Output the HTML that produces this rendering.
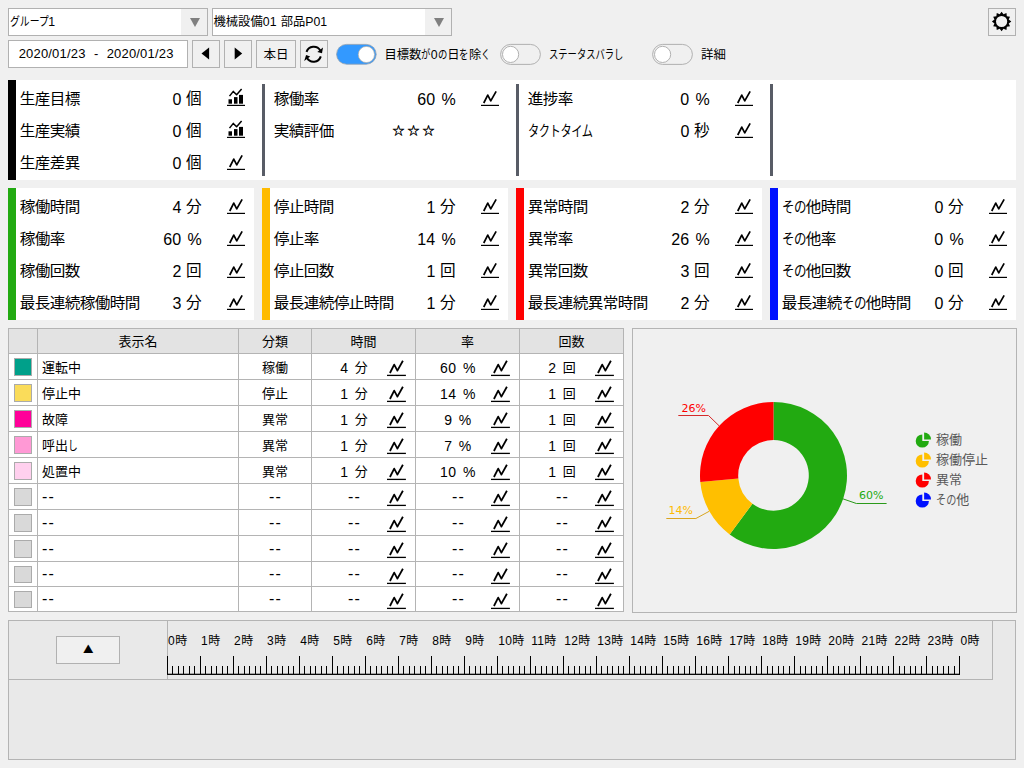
<!DOCTYPE html>
<html lang="ja"><head><meta charset="utf-8"><title>稼働モニタ</title>
<style>
html,body{margin:0;padding:0}
body{width:1024px;height:768px;overflow:hidden;background:#f0f0f0;font-family:"Liberation Sans","Noto Sans CJK JP",sans-serif;color:#000;position:relative;font-size:12px}
div,span{box-sizing:border-box}
.abs{position:absolute}
.box{position:absolute;border:1px solid #b1b1b1;background:#fff}
.btn{position:absolute;border:1px solid #b1b1b1;background:#f0f0f0}
.t12{position:absolute;font-size:12px;line-height:28px;height:28px;white-space:nowrap}
.k{display:inline-block;transform-origin:0 50%;white-space:nowrap}
.kpi{position:absolute;height:32px;line-height:32px;font-size:15.6px;letter-spacing:-.6px;white-space:nowrap;transform:scaleY(.94);transform-origin:0 50%}
.val{position:absolute;height:32px;line-height:32px;font-size:15px;white-space:nowrap;text-align:right;width:80px}
.cell{position:absolute;font-size:13px;white-space:nowrap;height:26px;line-height:26px}
.n{font-size:16px;line-height:0;position:relative;top:.5px;word-spacing:1.5px;letter-spacing:.2px}
.dd{font-size:16px;line-height:0;position:relative;top:.2px;letter-spacing:1.2px;margin-right:-1.2px}
.u{font-size:15.6px;margin-left:-1.6px;margin-right:.3px}
.m{font-size:14px;line-height:0;position:relative;top:.5px;word-spacing:2px;letter-spacing:.5px}
.sw{position:absolute;width:18px;height:18px;border:1px solid #ababab}
svg{position:absolute;overflow:visible}
.tg{position:absolute;width:41px;height:21px;border-radius:11px}
.kn{position:absolute;width:19px;height:19px;border-radius:10px;background:#fff;border:1px solid #a0a0a0;top:0}
</style></head><body>

<div class="box" style="left:8px;top:8px;width:200px;height:28px"></div>
<div class="abs" style="left:181px;top:9px;width:26px;height:26px;background:#f0f0f0"></div>
<svg style="left:190px;top:18px" width="10" height="9"><path d="M0 0H10L5 9Z" fill="#808080"/></svg>
<div class="t12" style="left:9.5px;top:8px;font-size:12.3px"><span class="k" style="transform:scaleX(0.800);margin-right:-9.60px">グループ</span>1</div>
<div class="box" style="left:212px;top:8px;width:240px;height:28px"></div>
<div class="abs" style="left:425px;top:9px;width:26px;height:26px;background:#f0f0f0"></div>
<svg style="left:434px;top:18px" width="10" height="9"><path d="M0 0H10L5 9Z" fill="#808080"/></svg>
<div class="t12" style="left:213.5px;top:8px;font-size:12.3px">機械設備<span style="letter-spacing:.3px">01 </span>部品P01</div>
<div class="box" style="left:8px;top:40px;width:180px;height:28px"></div>
<div class="t12" style="left:18.7px;top:40px;font-size:13px;letter-spacing:.18px">2020/01/23</div>
<div class="t12" style="left:94px;top:40px;font-size:13px">-</div>
<div class="t12" style="left:106.7px;top:40px;font-size:13px;letter-spacing:.18px">2020/01/23</div>
<div class="btn" style="left:192px;top:40px;width:28px;height:28px"></div>
<div class="btn" style="left:224px;top:40px;width:28px;height:28px"></div>
<div class="btn" style="left:256px;top:40px;width:40px;height:28px"></div>
<div class="btn" style="left:300px;top:40px;width:28px;height:28px"></div>
<svg style="left:201px;top:47px" width="9" height="13"><path d="M8.1 .5V12.6L.5 6.55Z" fill="#000"/></svg>
<svg style="left:234px;top:47px" width="9" height="13"><path d="M.7 .5V12.6L8.2 6.55Z" fill="#000"/></svg>
<div class="t12" style="left:256px;top:41px;width:40px;text-align:center;font-size:12.5px">本日</div>
<svg style="left:300px;top:40px" width="28" height="28" viewBox="300 40 28 28"><path d="M306.5 51.9A7.6 7.6 0 0 1 320.3 50.5" fill="none" stroke="#000" stroke-width="2"/><path d="M323.0 47.6L322.0 53.2L317.3 52.0Z" fill="#000"/><path d="M320.8 56.4A7.6 7.6 0 0 1 306.9 57.8" fill="none" stroke="#000" stroke-width="2"/><path d="M304.2 60.9L306.1 55.0L310.2 56.4Z" fill="#000"/></svg>
<svg style="left:0;top:0" width="1024" height="72"><rect x="336.6" y="44.4" width="39.6" height="19.8" rx="9.9" fill="#3399ff" stroke="#8fa0b0" stroke-width=".8"/><circle cx="366.4" cy="54.5" r="8.1" fill="#fff" stroke="#b8b0a8" stroke-width=".7"/></svg>
<div class="t12" style="left:384.5px;top:41px;font-size:12.3px">目標数<span class="k" style="transform:scaleX(0.760);margin-right:-2.88px">が</span>0<span class="k" style="transform:scaleX(0.760);margin-right:-2.88px">の</span>日<span class="k" style="transform:scaleX(0.760);margin-right:-2.88px">を</span>除<span class="k" style="transform:scaleX(0.760);margin-right:-2.88px">く</span></div>
<svg style="left:0;top:0" width="1024" height="72"><rect x="500.6" y="44.4" width="39.8" height="20" rx="10" fill="#f0f0f0" stroke="#a9a9a9" stroke-width=".9"/><circle cx="510.6" cy="54.4" r="8.1" fill="#fff" stroke="#a9a9a9" stroke-width=".9"/></svg>
<div class="t12" style="left:549px;top:41px;font-size:12.4px"><span class="k" style="transform:scaleX(0.750);margin-right:-24.00px">ステータスバラし</span></div>
<svg style="left:0;top:0" width="1024" height="72"><rect x="652.6" y="44.4" width="39.8" height="20" rx="10" fill="#f0f0f0" stroke="#a9a9a9" stroke-width=".9"/><circle cx="662.6" cy="54.4" r="8.1" fill="#fff" stroke="#a9a9a9" stroke-width=".9"/></svg>
<div class="t12" style="left:701px;top:41px;font-size:12.4px">詳細</div>
<div class="btn" style="left:988px;top:8px;width:28px;height:28px"></div>
<svg style="left:0;top:0" width="1024" height="40"><path d="M1001.60 11.80L1003.52 14.35L1006.45 13.10L1006.83 16.27L1010.00 16.65L1008.75 19.58L1011.30 21.50L1008.75 23.42L1010.00 26.35L1006.83 26.73L1006.45 29.90L1003.52 28.65L1001.60 31.20L999.68 28.65L996.75 29.90L996.37 26.73L993.20 26.35L994.45 23.42L991.90 21.50L994.45 19.58L993.20 16.65L996.37 16.27L996.75 13.10L999.68 14.35ZM996.00 21.50A5.60 5.60 0 1 0 1007.20 21.50A5.60 5.60 0 1 0 996.00 21.50Z" fill="#000" fill-rule="evenodd"/></svg>
<div class="abs" style="left:8px;top:80px;width:1008px;height:100px;background:#fff"></div>
<div class="abs" style="left:8px;top:80px;width:8px;height:100px;background:#000"></div>
<div class="abs" style="left:262px;top:84px;width:3px;height:92px;background:#585c66"></div>
<div class="abs" style="left:516px;top:84px;width:3px;height:92px;background:#585c66"></div>
<div class="abs" style="left:770px;top:84px;width:3px;height:92px;background:#585c66"></div>
<div class="kpi" style="left:19.7px;top:83px">生産目標</div>
<div class="val" style="left:122px;top:83px"><span class="n">0 </span><span class="u">個</span></div>
<svg style="left:227px;top:89px" width="18" height="17" viewBox="0 -16 18 17"><rect x="0" y="-0.2" width="18" height="1.2" fill="#000"/><rect x="1.5" y="-5.7" width="3.5" height="4.4" fill="#000"/><rect x="7" y="-7.9" width="3.5" height="6.6" fill="#000"/><rect x="12" y="-10.1" width="4" height="8.8" fill="#000"/><path d="M2.5 -8.9L6.3 -13.6L9.6 -10.2L14.6 -15.9" fill="none" stroke="#000" stroke-width="1.5" stroke-linejoin="round"/></svg>
<div class="kpi" style="left:19.7px;top:115px">生産実績</div>
<div class="val" style="left:122px;top:115px"><span class="n">0 </span><span class="u">個</span></div>
<svg style="left:227px;top:121px" width="18" height="17" viewBox="0 -16 18 17"><rect x="0" y="-0.2" width="18" height="1.2" fill="#000"/><rect x="1.5" y="-5.7" width="3.5" height="4.4" fill="#000"/><rect x="7" y="-7.9" width="3.5" height="6.6" fill="#000"/><rect x="12" y="-10.1" width="4" height="8.8" fill="#000"/><path d="M2.5 -8.9L6.3 -13.6L9.6 -10.2L14.6 -15.9" fill="none" stroke="#000" stroke-width="1.5" stroke-linejoin="round"/></svg>
<div class="kpi" style="left:19.7px;top:147px">生産差異</div>
<div class="val" style="left:122px;top:147px"><span class="n">0 </span><span class="u">個</span></div>
<svg style="left:227px;top:153px" width="18" height="17" viewBox="0 -16 18 17"><rect x="0" y="-0.2" width="18" height="1.2" fill="#000"/><path d="M2.75 -2.0L6.75 -9.9L9.75 -4.1L15.15 -13.7" fill="none" stroke="#000" stroke-width="1.7" stroke-linejoin="round"/></svg>
<div class="kpi" style="left:273.7px;top:83px">稼働率</div>
<div class="val" style="left:376px;top:83px"><span class="n">60 %</span></div>
<svg style="left:481px;top:89px" width="18" height="17" viewBox="0 -16 18 17"><rect x="0" y="-0.2" width="18" height="1.2" fill="#000"/><path d="M2.75 -2.0L6.75 -9.9L9.75 -4.1L15.15 -13.7" fill="none" stroke="#000" stroke-width="1.7" stroke-linejoin="round"/></svg>
<div class="kpi" style="left:273.7px;top:115px">実績評価</div>
<div class="kpi" style="left:392.5px;top:115px;font-size:12px;letter-spacing:3px;-webkit-text-stroke:.35px #000">☆☆☆</div>
<div class="kpi" style="left:527.7px;top:83px">進捗率</div>
<div class="val" style="left:630px;top:83px"><span class="n">0 %</span></div>
<svg style="left:735px;top:89px" width="18" height="17" viewBox="0 -16 18 17"><rect x="0" y="-0.2" width="18" height="1.2" fill="#000"/><path d="M2.75 -2.0L6.75 -9.9L9.75 -4.1L15.15 -13.7" fill="none" stroke="#000" stroke-width="1.7" stroke-linejoin="round"/></svg>
<div class="kpi" style="left:527.7px;top:115px"><span class="k" style="transform:scaleX(0.720);margin-right:-25.20px">タクトタイム</span></div>
<div class="val" style="left:630px;top:115px"><span class="n">0 </span><span class="u">秒</span></div>
<svg style="left:735px;top:121px" width="18" height="17" viewBox="0 -16 18 17"><rect x="0" y="-0.2" width="18" height="1.2" fill="#000"/><path d="M2.75 -2.0L6.75 -9.9L9.75 -4.1L15.15 -13.7" fill="none" stroke="#000" stroke-width="1.7" stroke-linejoin="round"/></svg>
<div class="abs" style="left:8px;top:188px;width:246px;height:132px;background:#fff"></div>
<div class="abs" style="left:8px;top:188px;width:8px;height:132px;background:#22aa11"></div>
<div class="kpi" style="left:19.7px;top:191px">稼働時間</div>
<div class="val" style="left:122px;top:191px"><span class="n">4 </span><span class="u">分</span></div>
<svg style="left:227px;top:197px" width="18" height="17" viewBox="0 -16 18 17"><rect x="0" y="-0.2" width="18" height="1.2" fill="#000"/><path d="M2.75 -2.0L6.75 -9.9L9.75 -4.1L15.15 -13.7" fill="none" stroke="#000" stroke-width="1.7" stroke-linejoin="round"/></svg>
<div class="kpi" style="left:19.7px;top:223px">稼働率</div>
<div class="val" style="left:122px;top:223px"><span class="n">60 %</span></div>
<svg style="left:227px;top:229px" width="18" height="17" viewBox="0 -16 18 17"><rect x="0" y="-0.2" width="18" height="1.2" fill="#000"/><path d="M2.75 -2.0L6.75 -9.9L9.75 -4.1L15.15 -13.7" fill="none" stroke="#000" stroke-width="1.7" stroke-linejoin="round"/></svg>
<div class="kpi" style="left:19.7px;top:255px">稼働回数</div>
<div class="val" style="left:122px;top:255px"><span class="n">2 </span><span class="u">回</span></div>
<svg style="left:227px;top:261px" width="18" height="17" viewBox="0 -16 18 17"><rect x="0" y="-0.2" width="18" height="1.2" fill="#000"/><path d="M2.75 -2.0L6.75 -9.9L9.75 -4.1L15.15 -13.7" fill="none" stroke="#000" stroke-width="1.7" stroke-linejoin="round"/></svg>
<div class="kpi" style="left:19.7px;top:287px">最長連続稼働時間</div>
<div class="val" style="left:122px;top:287px"><span class="n">3 </span><span class="u">分</span></div>
<svg style="left:227px;top:293px" width="18" height="17" viewBox="0 -16 18 17"><rect x="0" y="-0.2" width="18" height="1.2" fill="#000"/><path d="M2.75 -2.0L6.75 -9.9L9.75 -4.1L15.15 -13.7" fill="none" stroke="#000" stroke-width="1.7" stroke-linejoin="round"/></svg>
<div class="abs" style="left:262px;top:188px;width:246px;height:132px;background:#fff"></div>
<div class="abs" style="left:262px;top:188px;width:8px;height:132px;background:#ffbb00"></div>
<div class="kpi" style="left:273.7px;top:191px">停止時間</div>
<div class="val" style="left:376px;top:191px"><span class="n">1 </span><span class="u">分</span></div>
<svg style="left:481px;top:197px" width="18" height="17" viewBox="0 -16 18 17"><rect x="0" y="-0.2" width="18" height="1.2" fill="#000"/><path d="M2.75 -2.0L6.75 -9.9L9.75 -4.1L15.15 -13.7" fill="none" stroke="#000" stroke-width="1.7" stroke-linejoin="round"/></svg>
<div class="kpi" style="left:273.7px;top:223px">停止率</div>
<div class="val" style="left:376px;top:223px"><span class="n">14 %</span></div>
<svg style="left:481px;top:229px" width="18" height="17" viewBox="0 -16 18 17"><rect x="0" y="-0.2" width="18" height="1.2" fill="#000"/><path d="M2.75 -2.0L6.75 -9.9L9.75 -4.1L15.15 -13.7" fill="none" stroke="#000" stroke-width="1.7" stroke-linejoin="round"/></svg>
<div class="kpi" style="left:273.7px;top:255px">停止回数</div>
<div class="val" style="left:376px;top:255px"><span class="n">1 </span><span class="u">回</span></div>
<svg style="left:481px;top:261px" width="18" height="17" viewBox="0 -16 18 17"><rect x="0" y="-0.2" width="18" height="1.2" fill="#000"/><path d="M2.75 -2.0L6.75 -9.9L9.75 -4.1L15.15 -13.7" fill="none" stroke="#000" stroke-width="1.7" stroke-linejoin="round"/></svg>
<div class="kpi" style="left:273.7px;top:287px">最長連続停止時間</div>
<div class="val" style="left:376px;top:287px"><span class="n">1 </span><span class="u">分</span></div>
<svg style="left:481px;top:293px" width="18" height="17" viewBox="0 -16 18 17"><rect x="0" y="-0.2" width="18" height="1.2" fill="#000"/><path d="M2.75 -2.0L6.75 -9.9L9.75 -4.1L15.15 -13.7" fill="none" stroke="#000" stroke-width="1.7" stroke-linejoin="round"/></svg>
<div class="abs" style="left:516px;top:188px;width:246px;height:132px;background:#fff"></div>
<div class="abs" style="left:516px;top:188px;width:8px;height:132px;background:#ff0000"></div>
<div class="kpi" style="left:527.7px;top:191px">異常時間</div>
<div class="val" style="left:630px;top:191px"><span class="n">2 </span><span class="u">分</span></div>
<svg style="left:735px;top:197px" width="18" height="17" viewBox="0 -16 18 17"><rect x="0" y="-0.2" width="18" height="1.2" fill="#000"/><path d="M2.75 -2.0L6.75 -9.9L9.75 -4.1L15.15 -13.7" fill="none" stroke="#000" stroke-width="1.7" stroke-linejoin="round"/></svg>
<div class="kpi" style="left:527.7px;top:223px">異常率</div>
<div class="val" style="left:630px;top:223px"><span class="n">26 %</span></div>
<svg style="left:735px;top:229px" width="18" height="17" viewBox="0 -16 18 17"><rect x="0" y="-0.2" width="18" height="1.2" fill="#000"/><path d="M2.75 -2.0L6.75 -9.9L9.75 -4.1L15.15 -13.7" fill="none" stroke="#000" stroke-width="1.7" stroke-linejoin="round"/></svg>
<div class="kpi" style="left:527.7px;top:255px">異常回数</div>
<div class="val" style="left:630px;top:255px"><span class="n">3 </span><span class="u">回</span></div>
<svg style="left:735px;top:261px" width="18" height="17" viewBox="0 -16 18 17"><rect x="0" y="-0.2" width="18" height="1.2" fill="#000"/><path d="M2.75 -2.0L6.75 -9.9L9.75 -4.1L15.15 -13.7" fill="none" stroke="#000" stroke-width="1.7" stroke-linejoin="round"/></svg>
<div class="kpi" style="left:527.7px;top:287px">最長連続異常時間</div>
<div class="val" style="left:630px;top:287px"><span class="n">2 </span><span class="u">分</span></div>
<svg style="left:735px;top:293px" width="18" height="17" viewBox="0 -16 18 17"><rect x="0" y="-0.2" width="18" height="1.2" fill="#000"/><path d="M2.75 -2.0L6.75 -9.9L9.75 -4.1L15.15 -13.7" fill="none" stroke="#000" stroke-width="1.7" stroke-linejoin="round"/></svg>
<div class="abs" style="left:770px;top:188px;width:246px;height:132px;background:#fff"></div>
<div class="abs" style="left:770px;top:188px;width:8px;height:132px;background:#0011ff"></div>
<div class="kpi" style="left:781.7px;top:191px"><span class="k" style="transform:scaleX(0.800);margin-right:-6.00px">その</span>他時間</div>
<div class="val" style="left:884px;top:191px"><span class="n">0 </span><span class="u">分</span></div>
<svg style="left:989px;top:197px" width="18" height="17" viewBox="0 -16 18 17"><rect x="0" y="-0.2" width="18" height="1.2" fill="#000"/><path d="M2.75 -2.0L6.75 -9.9L9.75 -4.1L15.15 -13.7" fill="none" stroke="#000" stroke-width="1.7" stroke-linejoin="round"/></svg>
<div class="kpi" style="left:781.7px;top:223px"><span class="k" style="transform:scaleX(0.800);margin-right:-6.00px">その</span>他率</div>
<div class="val" style="left:884px;top:223px"><span class="n">0 %</span></div>
<svg style="left:989px;top:229px" width="18" height="17" viewBox="0 -16 18 17"><rect x="0" y="-0.2" width="18" height="1.2" fill="#000"/><path d="M2.75 -2.0L6.75 -9.9L9.75 -4.1L15.15 -13.7" fill="none" stroke="#000" stroke-width="1.7" stroke-linejoin="round"/></svg>
<div class="kpi" style="left:781.7px;top:255px"><span class="k" style="transform:scaleX(0.800);margin-right:-6.00px">その</span>他回数</div>
<div class="val" style="left:884px;top:255px"><span class="n">0 </span><span class="u">回</span></div>
<svg style="left:989px;top:261px" width="18" height="17" viewBox="0 -16 18 17"><rect x="0" y="-0.2" width="18" height="1.2" fill="#000"/><path d="M2.75 -2.0L6.75 -9.9L9.75 -4.1L15.15 -13.7" fill="none" stroke="#000" stroke-width="1.7" stroke-linejoin="round"/></svg>
<div class="kpi" style="left:781.7px;top:287px">最長連続<span class="k" style="transform:scaleX(0.800);margin-right:-6.00px">その</span>他時間</div>
<div class="val" style="left:884px;top:287px"><span class="n">0 </span><span class="u">分</span></div>
<svg style="left:989px;top:293px" width="18" height="17" viewBox="0 -16 18 17"><rect x="0" y="-0.2" width="18" height="1.2" fill="#000"/><path d="M2.75 -2.0L6.75 -9.9L9.75 -4.1L15.15 -13.7" fill="none" stroke="#000" stroke-width="1.7" stroke-linejoin="round"/></svg>
<div class="abs" style="left:8px;top:328px;width:616px;height:284px;background:#fff"></div>
<div class="abs" style="left:8px;top:328px;width:616px;height:26px;background:#e3e3e3"></div>
<div class="abs" style="left:8px;top:328px;width:616px;height:1px;background:#b4b4b4"></div>
<div class="abs" style="left:8px;top:353px;width:616px;height:1px;background:#b4b4b4"></div>
<div class="abs" style="left:8px;top:379px;width:616px;height:1px;background:#b4b4b4"></div>
<div class="abs" style="left:8px;top:405px;width:616px;height:1px;background:#b4b4b4"></div>
<div class="abs" style="left:8px;top:431px;width:616px;height:1px;background:#b4b4b4"></div>
<div class="abs" style="left:8px;top:457px;width:616px;height:1px;background:#b4b4b4"></div>
<div class="abs" style="left:8px;top:483px;width:616px;height:1px;background:#b4b4b4"></div>
<div class="abs" style="left:8px;top:509px;width:616px;height:1px;background:#b4b4b4"></div>
<div class="abs" style="left:8px;top:535px;width:616px;height:1px;background:#b4b4b4"></div>
<div class="abs" style="left:8px;top:561px;width:616px;height:1px;background:#b4b4b4"></div>
<div class="abs" style="left:8px;top:586px;width:616px;height:1px;background:#b4b4b4"></div>
<div class="abs" style="left:8px;top:611px;width:616px;height:1px;background:#b4b4b4"></div>
<div class="abs" style="left:8px;top:328px;width:1px;height:284px;background:#b4b4b4"></div>
<div class="abs" style="left:37px;top:328px;width:1px;height:284px;background:#b4b4b4"></div>
<div class="abs" style="left:238px;top:328px;width:1px;height:284px;background:#b4b4b4"></div>
<div class="abs" style="left:311px;top:328px;width:1px;height:284px;background:#b4b4b4"></div>
<div class="abs" style="left:415px;top:328px;width:1px;height:284px;background:#b4b4b4"></div>
<div class="abs" style="left:519px;top:328px;width:1px;height:284px;background:#b4b4b4"></div>
<div class="abs" style="left:623px;top:328px;width:1px;height:284px;background:#b4b4b4"></div>
<div class="cell" style="left:38px;top:329px;width:200px;text-align:center">表示名</div>
<div class="cell" style="left:239px;top:329px;width:72px;text-align:center">分類</div>
<div class="cell" style="left:312px;top:329px;width:103px;text-align:center">時間</div>
<div class="cell" style="left:416px;top:329px;width:103px;text-align:center">率</div>
<div class="cell" style="left:520px;top:329px;width:103px;text-align:center">回数</div>
<div class="sw" style="left:14px;top:358px;background:#00a08a"></div>
<div class="cell" style="left:42px;top:355px">運転中</div>
<div class="cell" style="left:239px;top:355px;width:72px;text-align:center">稼働</div>
<div class="cell" style="left:341px;top:355px;width:26px;text-align:center;overflow:visible"><span style="display:inline-block;margin:0 -20px"><span class="m">4 </span>分</span></div>
<svg style="left:387px;top:359px" width="19" height="17" viewBox="0 -16 19 17"><rect x="0" y="-0.25" width="18.9" height="1.3" fill="#000"/><path d="M2.95 -2.0L7.2 -10.4L10.4 -4.4L15.9 -14.2" fill="none" stroke="#000" stroke-width="1.8" stroke-linejoin="round"/></svg>
<div class="cell" style="left:445px;top:355px;width:26px;text-align:center;overflow:visible"><span style="display:inline-block;margin:0 -20px"><span class="m">60 %</span></span></div>
<svg style="left:491px;top:359px" width="19" height="17" viewBox="0 -16 19 17"><rect x="0" y="-0.25" width="18.9" height="1.3" fill="#000"/><path d="M2.95 -2.0L7.2 -10.4L10.4 -4.4L15.9 -14.2" fill="none" stroke="#000" stroke-width="1.8" stroke-linejoin="round"/></svg>
<div class="cell" style="left:549px;top:355px;width:26px;text-align:center;overflow:visible"><span style="display:inline-block;margin:0 -20px"><span class="m">2 </span>回</span></div>
<svg style="left:595px;top:359px" width="19" height="17" viewBox="0 -16 19 17"><rect x="0" y="-0.25" width="18.9" height="1.3" fill="#000"/><path d="M2.95 -2.0L7.2 -10.4L10.4 -4.4L15.9 -14.2" fill="none" stroke="#000" stroke-width="1.8" stroke-linejoin="round"/></svg>
<div class="sw" style="left:14px;top:384px;background:#fadc5a"></div>
<div class="cell" style="left:42px;top:381px">停止中</div>
<div class="cell" style="left:239px;top:381px;width:72px;text-align:center">停止</div>
<div class="cell" style="left:341px;top:381px;width:26px;text-align:center;overflow:visible"><span style="display:inline-block;margin:0 -20px"><span class="m">1 </span>分</span></div>
<svg style="left:387px;top:385px" width="19" height="17" viewBox="0 -16 19 17"><rect x="0" y="-0.25" width="18.9" height="1.3" fill="#000"/><path d="M2.95 -2.0L7.2 -10.4L10.4 -4.4L15.9 -14.2" fill="none" stroke="#000" stroke-width="1.8" stroke-linejoin="round"/></svg>
<div class="cell" style="left:445px;top:381px;width:26px;text-align:center;overflow:visible"><span style="display:inline-block;margin:0 -20px"><span class="m">14 %</span></span></div>
<svg style="left:491px;top:385px" width="19" height="17" viewBox="0 -16 19 17"><rect x="0" y="-0.25" width="18.9" height="1.3" fill="#000"/><path d="M2.95 -2.0L7.2 -10.4L10.4 -4.4L15.9 -14.2" fill="none" stroke="#000" stroke-width="1.8" stroke-linejoin="round"/></svg>
<div class="cell" style="left:549px;top:381px;width:26px;text-align:center;overflow:visible"><span style="display:inline-block;margin:0 -20px"><span class="m">1 </span>回</span></div>
<svg style="left:595px;top:385px" width="19" height="17" viewBox="0 -16 19 17"><rect x="0" y="-0.25" width="18.9" height="1.3" fill="#000"/><path d="M2.95 -2.0L7.2 -10.4L10.4 -4.4L15.9 -14.2" fill="none" stroke="#000" stroke-width="1.8" stroke-linejoin="round"/></svg>
<div class="sw" style="left:14px;top:410px;background:#ff0099"></div>
<div class="cell" style="left:42px;top:407px">故障</div>
<div class="cell" style="left:239px;top:407px;width:72px;text-align:center">異常</div>
<div class="cell" style="left:341px;top:407px;width:26px;text-align:center;overflow:visible"><span style="display:inline-block;margin:0 -20px"><span class="m">1 </span>分</span></div>
<svg style="left:387px;top:411px" width="19" height="17" viewBox="0 -16 19 17"><rect x="0" y="-0.25" width="18.9" height="1.3" fill="#000"/><path d="M2.95 -2.0L7.2 -10.4L10.4 -4.4L15.9 -14.2" fill="none" stroke="#000" stroke-width="1.8" stroke-linejoin="round"/></svg>
<div class="cell" style="left:445px;top:407px;width:26px;text-align:center;overflow:visible"><span style="display:inline-block;margin:0 -20px"><span class="m">9 %</span></span></div>
<svg style="left:491px;top:411px" width="19" height="17" viewBox="0 -16 19 17"><rect x="0" y="-0.25" width="18.9" height="1.3" fill="#000"/><path d="M2.95 -2.0L7.2 -10.4L10.4 -4.4L15.9 -14.2" fill="none" stroke="#000" stroke-width="1.8" stroke-linejoin="round"/></svg>
<div class="cell" style="left:549px;top:407px;width:26px;text-align:center;overflow:visible"><span style="display:inline-block;margin:0 -20px"><span class="m">1 </span>回</span></div>
<svg style="left:595px;top:411px" width="19" height="17" viewBox="0 -16 19 17"><rect x="0" y="-0.25" width="18.9" height="1.3" fill="#000"/><path d="M2.95 -2.0L7.2 -10.4L10.4 -4.4L15.9 -14.2" fill="none" stroke="#000" stroke-width="1.8" stroke-linejoin="round"/></svg>
<div class="sw" style="left:14px;top:436px;background:#ff99d5"></div>
<div class="cell" style="left:42px;top:433px">呼出<span class="k" style="transform:scaleX(0.750);margin-right:-3.25px">し</span></div>
<div class="cell" style="left:239px;top:433px;width:72px;text-align:center">異常</div>
<div class="cell" style="left:341px;top:433px;width:26px;text-align:center;overflow:visible"><span style="display:inline-block;margin:0 -20px"><span class="m">1 </span>分</span></div>
<svg style="left:387px;top:437px" width="19" height="17" viewBox="0 -16 19 17"><rect x="0" y="-0.25" width="18.9" height="1.3" fill="#000"/><path d="M2.95 -2.0L7.2 -10.4L10.4 -4.4L15.9 -14.2" fill="none" stroke="#000" stroke-width="1.8" stroke-linejoin="round"/></svg>
<div class="cell" style="left:445px;top:433px;width:26px;text-align:center;overflow:visible"><span style="display:inline-block;margin:0 -20px"><span class="m">7 %</span></span></div>
<svg style="left:491px;top:437px" width="19" height="17" viewBox="0 -16 19 17"><rect x="0" y="-0.25" width="18.9" height="1.3" fill="#000"/><path d="M2.95 -2.0L7.2 -10.4L10.4 -4.4L15.9 -14.2" fill="none" stroke="#000" stroke-width="1.8" stroke-linejoin="round"/></svg>
<div class="cell" style="left:549px;top:433px;width:26px;text-align:center;overflow:visible"><span style="display:inline-block;margin:0 -20px"><span class="m">1 </span>回</span></div>
<svg style="left:595px;top:437px" width="19" height="17" viewBox="0 -16 19 17"><rect x="0" y="-0.25" width="18.9" height="1.3" fill="#000"/><path d="M2.95 -2.0L7.2 -10.4L10.4 -4.4L15.9 -14.2" fill="none" stroke="#000" stroke-width="1.8" stroke-linejoin="round"/></svg>
<div class="sw" style="left:14px;top:462px;background:#ffd0ee"></div>
<div class="cell" style="left:42px;top:459px">処置中</div>
<div class="cell" style="left:239px;top:459px;width:72px;text-align:center">異常</div>
<div class="cell" style="left:341px;top:459px;width:26px;text-align:center;overflow:visible"><span style="display:inline-block;margin:0 -20px"><span class="m">1 </span>分</span></div>
<svg style="left:387px;top:463px" width="19" height="17" viewBox="0 -16 19 17"><rect x="0" y="-0.25" width="18.9" height="1.3" fill="#000"/><path d="M2.95 -2.0L7.2 -10.4L10.4 -4.4L15.9 -14.2" fill="none" stroke="#000" stroke-width="1.8" stroke-linejoin="round"/></svg>
<div class="cell" style="left:445px;top:459px;width:26px;text-align:center;overflow:visible"><span style="display:inline-block;margin:0 -20px"><span class="m">10 %</span></span></div>
<svg style="left:491px;top:463px" width="19" height="17" viewBox="0 -16 19 17"><rect x="0" y="-0.25" width="18.9" height="1.3" fill="#000"/><path d="M2.95 -2.0L7.2 -10.4L10.4 -4.4L15.9 -14.2" fill="none" stroke="#000" stroke-width="1.8" stroke-linejoin="round"/></svg>
<div class="cell" style="left:549px;top:459px;width:26px;text-align:center;overflow:visible"><span style="display:inline-block;margin:0 -20px"><span class="m">1 </span>回</span></div>
<svg style="left:595px;top:463px" width="19" height="17" viewBox="0 -16 19 17"><rect x="0" y="-0.25" width="18.9" height="1.3" fill="#000"/><path d="M2.95 -2.0L7.2 -10.4L10.4 -4.4L15.9 -14.2" fill="none" stroke="#000" stroke-width="1.8" stroke-linejoin="round"/></svg>
<div class="sw" style="left:14px;top:488px;background:#d9d9d9"></div>
<div class="cell" style="left:42px;top:485px"><span class="dd">--</span></div>
<div class="cell" style="left:239px;top:485px;width:72px;text-align:center"><span class="dd">--</span></div>
<div class="cell" style="left:341px;top:485px;width:26px;text-align:center"><span class="dd">--</span></div>
<svg style="left:387px;top:489px" width="19" height="17" viewBox="0 -16 19 17"><rect x="0" y="-0.25" width="18.9" height="1.3" fill="#000"/><path d="M2.95 -2.0L7.2 -10.4L10.4 -4.4L15.9 -14.2" fill="none" stroke="#000" stroke-width="1.8" stroke-linejoin="round"/></svg>
<div class="cell" style="left:445px;top:485px;width:26px;text-align:center"><span class="dd">--</span></div>
<svg style="left:491px;top:489px" width="19" height="17" viewBox="0 -16 19 17"><rect x="0" y="-0.25" width="18.9" height="1.3" fill="#000"/><path d="M2.95 -2.0L7.2 -10.4L10.4 -4.4L15.9 -14.2" fill="none" stroke="#000" stroke-width="1.8" stroke-linejoin="round"/></svg>
<div class="cell" style="left:549px;top:485px;width:26px;text-align:center"><span class="dd">--</span></div>
<svg style="left:595px;top:489px" width="19" height="17" viewBox="0 -16 19 17"><rect x="0" y="-0.25" width="18.9" height="1.3" fill="#000"/><path d="M2.95 -2.0L7.2 -10.4L10.4 -4.4L15.9 -14.2" fill="none" stroke="#000" stroke-width="1.8" stroke-linejoin="round"/></svg>
<div class="sw" style="left:14px;top:514px;background:#d9d9d9"></div>
<div class="cell" style="left:42px;top:511px"><span class="dd">--</span></div>
<div class="cell" style="left:239px;top:511px;width:72px;text-align:center"><span class="dd">--</span></div>
<div class="cell" style="left:341px;top:511px;width:26px;text-align:center"><span class="dd">--</span></div>
<svg style="left:387px;top:515px" width="19" height="17" viewBox="0 -16 19 17"><rect x="0" y="-0.25" width="18.9" height="1.3" fill="#000"/><path d="M2.95 -2.0L7.2 -10.4L10.4 -4.4L15.9 -14.2" fill="none" stroke="#000" stroke-width="1.8" stroke-linejoin="round"/></svg>
<div class="cell" style="left:445px;top:511px;width:26px;text-align:center"><span class="dd">--</span></div>
<svg style="left:491px;top:515px" width="19" height="17" viewBox="0 -16 19 17"><rect x="0" y="-0.25" width="18.9" height="1.3" fill="#000"/><path d="M2.95 -2.0L7.2 -10.4L10.4 -4.4L15.9 -14.2" fill="none" stroke="#000" stroke-width="1.8" stroke-linejoin="round"/></svg>
<div class="cell" style="left:549px;top:511px;width:26px;text-align:center"><span class="dd">--</span></div>
<svg style="left:595px;top:515px" width="19" height="17" viewBox="0 -16 19 17"><rect x="0" y="-0.25" width="18.9" height="1.3" fill="#000"/><path d="M2.95 -2.0L7.2 -10.4L10.4 -4.4L15.9 -14.2" fill="none" stroke="#000" stroke-width="1.8" stroke-linejoin="round"/></svg>
<div class="sw" style="left:14px;top:540px;background:#d9d9d9"></div>
<div class="cell" style="left:42px;top:537px"><span class="dd">--</span></div>
<div class="cell" style="left:239px;top:537px;width:72px;text-align:center"><span class="dd">--</span></div>
<div class="cell" style="left:341px;top:537px;width:26px;text-align:center"><span class="dd">--</span></div>
<svg style="left:387px;top:541px" width="19" height="17" viewBox="0 -16 19 17"><rect x="0" y="-0.25" width="18.9" height="1.3" fill="#000"/><path d="M2.95 -2.0L7.2 -10.4L10.4 -4.4L15.9 -14.2" fill="none" stroke="#000" stroke-width="1.8" stroke-linejoin="round"/></svg>
<div class="cell" style="left:445px;top:537px;width:26px;text-align:center"><span class="dd">--</span></div>
<svg style="left:491px;top:541px" width="19" height="17" viewBox="0 -16 19 17"><rect x="0" y="-0.25" width="18.9" height="1.3" fill="#000"/><path d="M2.95 -2.0L7.2 -10.4L10.4 -4.4L15.9 -14.2" fill="none" stroke="#000" stroke-width="1.8" stroke-linejoin="round"/></svg>
<div class="cell" style="left:549px;top:537px;width:26px;text-align:center"><span class="dd">--</span></div>
<svg style="left:595px;top:541px" width="19" height="17" viewBox="0 -16 19 17"><rect x="0" y="-0.25" width="18.9" height="1.3" fill="#000"/><path d="M2.95 -2.0L7.2 -10.4L10.4 -4.4L15.9 -14.2" fill="none" stroke="#000" stroke-width="1.8" stroke-linejoin="round"/></svg>
<div class="sw" style="left:14px;top:566px;height:17px;background:#d9d9d9"></div>
<div class="cell" style="left:42px;top:562px"><span class="dd">--</span></div>
<div class="cell" style="left:239px;top:562px;width:72px;text-align:center"><span class="dd">--</span></div>
<div class="cell" style="left:341px;top:562px;width:26px;text-align:center"><span class="dd">--</span></div>
<svg style="left:387px;top:567px" width="19" height="17" viewBox="0 -16 19 17"><rect x="0" y="-0.25" width="18.9" height="1.3" fill="#000"/><path d="M2.95 -2.0L7.2 -10.4L10.4 -4.4L15.9 -14.2" fill="none" stroke="#000" stroke-width="1.8" stroke-linejoin="round"/></svg>
<div class="cell" style="left:445px;top:562px;width:26px;text-align:center"><span class="dd">--</span></div>
<svg style="left:491px;top:567px" width="19" height="17" viewBox="0 -16 19 17"><rect x="0" y="-0.25" width="18.9" height="1.3" fill="#000"/><path d="M2.95 -2.0L7.2 -10.4L10.4 -4.4L15.9 -14.2" fill="none" stroke="#000" stroke-width="1.8" stroke-linejoin="round"/></svg>
<div class="cell" style="left:549px;top:562px;width:26px;text-align:center"><span class="dd">--</span></div>
<svg style="left:595px;top:567px" width="19" height="17" viewBox="0 -16 19 17"><rect x="0" y="-0.25" width="18.9" height="1.3" fill="#000"/><path d="M2.95 -2.0L7.2 -10.4L10.4 -4.4L15.9 -14.2" fill="none" stroke="#000" stroke-width="1.8" stroke-linejoin="round"/></svg>
<div class="sw" style="left:14px;top:591px;height:17px;background:#d9d9d9"></div>
<div class="cell" style="left:42px;top:587px"><span class="dd">--</span></div>
<div class="cell" style="left:239px;top:587px;width:72px;text-align:center"><span class="dd">--</span></div>
<div class="cell" style="left:341px;top:587px;width:26px;text-align:center"><span class="dd">--</span></div>
<svg style="left:387px;top:592px" width="19" height="17" viewBox="0 -16 19 17"><rect x="0" y="-0.25" width="18.9" height="1.3" fill="#000"/><path d="M2.95 -2.0L7.2 -10.4L10.4 -4.4L15.9 -14.2" fill="none" stroke="#000" stroke-width="1.8" stroke-linejoin="round"/></svg>
<div class="cell" style="left:445px;top:587px;width:26px;text-align:center"><span class="dd">--</span></div>
<svg style="left:491px;top:592px" width="19" height="17" viewBox="0 -16 19 17"><rect x="0" y="-0.25" width="18.9" height="1.3" fill="#000"/><path d="M2.95 -2.0L7.2 -10.4L10.4 -4.4L15.9 -14.2" fill="none" stroke="#000" stroke-width="1.8" stroke-linejoin="round"/></svg>
<div class="cell" style="left:549px;top:587px;width:26px;text-align:center"><span class="dd">--</span></div>
<svg style="left:595px;top:592px" width="19" height="17" viewBox="0 -16 19 17"><rect x="0" y="-0.25" width="18.9" height="1.3" fill="#000"/><path d="M2.95 -2.0L7.2 -10.4L10.4 -4.4L15.9 -14.2" fill="none" stroke="#000" stroke-width="1.8" stroke-linejoin="round"/></svg>
<div class="abs" style="left:632px;top:328px;width:385px;height:285px;border:1px solid #b4b4b4;background:#f0f0f0"></div>
<svg style="left:0;top:0" width="1024" height="768" font-family='"DejaVu Sans",sans-serif' font-size="11"><path d="M773.50 401.90A73.50 73.50 0 1 1 729.68 534.41L752.45 503.74A35.30 35.30 0 1 0 773.50 440.10Z" fill="#22aa11"/><path d="M729.68 534.41A73.50 73.50 0 0 1 700.29 481.93L738.34 478.54A35.30 35.30 0 0 0 752.45 503.74Z" fill="#ffbf00"/><path d="M700.29 481.93A73.50 73.50 0 0 1 773.50 401.90L773.50 440.10A35.30 35.30 0 0 0 738.34 478.54Z" fill="#ff0000"/><path d="M842.8 498.8L856.4 503.5H886.6" fill="none" stroke="#2a9a1a" stroke-width="1"/><path d="M719 425.7L708.5 415.5H678.3" fill="none" stroke="#d42a2a" stroke-width="1"/><path d="M709.2 511.3L695.9 518.5H666.3" fill="none" stroke="#d9a520" stroke-width="1"/><text x="859" y="499" fill="#22aa11">60%</text><text x="681.5" y="412" fill="#ff0000">26%</text><text x="668.5" y="514" fill="#ffbb00">14%</text><path d="M922.30 441.00L922.30 434.40A6.60 6.60 0 1 0 928.90 441.00Z" fill="#22aa11"/><path d="M924.10 439.40V432.50A6.90 6.90 0 0 1 931.00 439.40Z" fill="#22aa11"/><path d="M922.30 461.00L922.30 454.40A6.60 6.60 0 1 0 928.90 461.00Z" fill="#ffbf00"/><path d="M924.10 459.40V452.50A6.90 6.90 0 0 1 931.00 459.40Z" fill="#ffbf00"/><path d="M922.30 481.00L922.30 474.40A6.60 6.60 0 1 0 928.90 481.00Z" fill="#ff0000"/><path d="M924.10 479.40V472.50A6.90 6.90 0 0 1 931.00 479.40Z" fill="#ff0000"/><path d="M922.30 501.00L922.30 494.40A6.60 6.60 0 1 0 928.90 501.00Z" fill="#0011ff"/><path d="M924.10 499.40V492.50A6.90 6.90 0 0 1 931.00 499.40Z" fill="#0011ff"/></svg>
<div class="cell" style="left:936px;top:430.0px;color:#585858;height:20px;line-height:20px">稼働</div>
<div class="cell" style="left:936px;top:450.0px;color:#585858;height:20px;line-height:20px">稼働停止</div>
<div class="cell" style="left:936px;top:470.0px;color:#585858;height:20px;line-height:20px">異常</div>
<div class="cell" style="left:936px;top:490.0px;color:#585858;height:20px;line-height:20px"><span class="k" style="transform:scaleX(0.780);margin-right:-5.72px">その</span>他</div>
<div class="abs" style="left:8px;top:620px;width:1008px;height:140px;border:1px solid #b4b4b4;background:#e9e9e9"></div>
<div class="abs" style="left:8px;top:679px;width:985px;height:1px;background:#b4b4b4"></div>
<div class="abs" style="left:167px;top:620px;width:1px;height:60px;background:#b4b4b4"></div>
<div class="abs" style="left:992px;top:620px;width:1px;height:60px;background:#b4b4b4"></div>
<div class="btn" style="left:56px;top:636px;width:64px;height:28px"></div>
<div class="abs" style="left:82.9px;top:641.2px;font:10.5px 'Noto Sans CJK JP',sans-serif;line-height:normal">▲</div>
<svg style="left:0;top:600px" width="1024" height="100" viewBox="0 600 1024 100" shape-rendering="crispEdges"><rect x="167" y="673.7" width="793.0" height="1.25" fill="#000" shape-rendering="auto"/><path d="M167 656V674h1V656ZM172 666V674h1V666ZM178 666V674h1V666ZM183 666V674h1V666ZM189 666V674h1V666ZM194 666V674h1V666ZM200 656V674h1V656ZM205 666V674h1V666ZM211 666V674h1V666ZM216 666V674h1V666ZM222 666V674h1V666ZM227 666V674h1V666ZM233 656V674h1V656ZM238 666V674h1V666ZM244 666V674h1V666ZM249 666V674h1V666ZM255 666V674h1V666ZM260 666V674h1V666ZM266 656V674h1V656ZM271 666V674h1V666ZM277 666V674h1V666ZM282 666V674h1V666ZM288 666V674h1V666ZM293 666V674h1V666ZM299 656V674h1V656ZM304 666V674h1V666ZM310 666V674h1V666ZM315 666V674h1V666ZM321 666V674h1V666ZM326 666V674h1V666ZM332 656V674h1V656ZM337 666V674h1V666ZM343 666V674h1V666ZM348 666V674h1V666ZM354 666V674h1V666ZM359 666V674h1V666ZM365 656V674h1V656ZM370 666V674h1V666ZM376 666V674h1V666ZM381 666V674h1V666ZM387 666V674h1V666ZM392 666V674h1V666ZM398 656V674h1V656ZM403 666V674h1V666ZM409 666V674h1V666ZM414 666V674h1V666ZM420 666V674h1V666ZM425 666V674h1V666ZM431 656V674h1V656ZM436 666V674h1V666ZM442 666V674h1V666ZM447 666V674h1V666ZM453 666V674h1V666ZM458 666V674h1V666ZM464 656V674h1V656ZM469 666V674h1V666ZM475 666V674h1V666ZM480 666V674h1V666ZM486 666V674h1V666ZM491 666V674h1V666ZM497 656V674h1V656ZM502 666V674h1V666ZM508 666V674h1V666ZM513 666V674h1V666ZM519 666V674h1V666ZM524 666V674h1V666ZM530 656V674h1V656ZM535 666V674h1V666ZM541 666V674h1V666ZM546 666V674h1V666ZM552 666V674h1V666ZM557 666V674h1V666ZM563 656V674h1V656ZM568 666V674h1V666ZM574 666V674h1V666ZM579 666V674h1V666ZM585 666V674h1V666ZM590 666V674h1V666ZM596 656V674h1V656ZM601 666V674h1V666ZM607 666V674h1V666ZM612 666V674h1V666ZM618 666V674h1V666ZM623 666V674h1V666ZM629 656V674h1V656ZM634 666V674h1V666ZM640 666V674h1V666ZM645 666V674h1V666ZM651 666V674h1V666ZM656 666V674h1V666ZM662 656V674h1V656ZM667 666V674h1V666ZM673 666V674h1V666ZM678 666V674h1V666ZM684 666V674h1V666ZM689 666V674h1V666ZM695 656V674h1V656ZM701 666V674h1V666ZM706 666V674h1V666ZM712 666V674h1V666ZM717 666V674h1V666ZM723 666V674h1V666ZM728 656V674h1V656ZM734 666V674h1V666ZM739 666V674h1V666ZM745 666V674h1V666ZM750 666V674h1V666ZM756 666V674h1V666ZM761 656V674h1V656ZM767 666V674h1V666ZM772 666V674h1V666ZM778 666V674h1V666ZM783 666V674h1V666ZM789 666V674h1V666ZM794 656V674h1V656ZM800 666V674h1V666ZM805 666V674h1V666ZM811 666V674h1V666ZM816 666V674h1V666ZM822 666V674h1V666ZM827 656V674h1V656ZM833 666V674h1V666ZM838 666V674h1V666ZM844 666V674h1V666ZM849 666V674h1V666ZM855 666V674h1V666ZM860 656V674h1V656ZM866 666V674h1V666ZM871 666V674h1V666ZM877 666V674h1V666ZM882 666V674h1V666ZM888 666V674h1V666ZM893 656V674h1V656ZM899 666V674h1V666ZM904 666V674h1V666ZM910 666V674h1V666ZM915 666V674h1V666ZM921 666V674h1V666ZM926 656V674h1V656ZM932 666V674h1V666ZM937 666V674h1V666ZM943 666V674h1V666ZM948 666V674h1V666ZM954 666V674h1V666ZM959 656V674h1V656Z" fill="#000"/></svg>
<div class="t12" style="left:168.1px;top:627px"><span style="letter-spacing:.35px">0</span>時</div>
<div class="t12" style="left:201.1px;top:627px"><span style="letter-spacing:.35px">1</span>時</div>
<div class="t12" style="left:234.1px;top:627px"><span style="letter-spacing:.35px">2</span>時</div>
<div class="t12" style="left:267.1px;top:627px"><span style="letter-spacing:.35px">3</span>時</div>
<div class="t12" style="left:300.2px;top:627px"><span style="letter-spacing:.35px">4</span>時</div>
<div class="t12" style="left:333.2px;top:627px"><span style="letter-spacing:.35px">5</span>時</div>
<div class="t12" style="left:366.2px;top:627px"><span style="letter-spacing:.35px">6</span>時</div>
<div class="t12" style="left:399.2px;top:627px"><span style="letter-spacing:.35px">7</span>時</div>
<div class="t12" style="left:432.2px;top:627px"><span style="letter-spacing:.35px">8</span>時</div>
<div class="t12" style="left:465.2px;top:627px"><span style="letter-spacing:.35px">9</span>時</div>
<div class="t12" style="left:498.2px;top:627px"><span style="letter-spacing:.35px">10</span>時</div>
<div class="t12" style="left:531.2px;top:627px"><span style="letter-spacing:.35px">11</span>時</div>
<div class="t12" style="left:564.2px;top:627px"><span style="letter-spacing:.35px">12</span>時</div>
<div class="t12" style="left:597.3px;top:627px"><span style="letter-spacing:.35px">13</span>時</div>
<div class="t12" style="left:630.3px;top:627px"><span style="letter-spacing:.35px">14</span>時</div>
<div class="t12" style="left:663.3px;top:627px"><span style="letter-spacing:.35px">15</span>時</div>
<div class="t12" style="left:696.3px;top:627px"><span style="letter-spacing:.35px">16</span>時</div>
<div class="t12" style="left:729.3px;top:627px"><span style="letter-spacing:.35px">17</span>時</div>
<div class="t12" style="left:762.3px;top:627px"><span style="letter-spacing:.35px">18</span>時</div>
<div class="t12" style="left:795.3px;top:627px"><span style="letter-spacing:.35px">19</span>時</div>
<div class="t12" style="left:828.3px;top:627px"><span style="letter-spacing:.35px">20</span>時</div>
<div class="t12" style="left:861.4px;top:627px"><span style="letter-spacing:.35px">21</span>時</div>
<div class="t12" style="left:894.4px;top:627px"><span style="letter-spacing:.35px">22</span>時</div>
<div class="t12" style="left:927.4px;top:627px"><span style="letter-spacing:.35px">23</span>時</div>
<div class="t12" style="left:960.4px;top:627px"><span style="letter-spacing:.35px">0</span>時</div>
</body></html>
